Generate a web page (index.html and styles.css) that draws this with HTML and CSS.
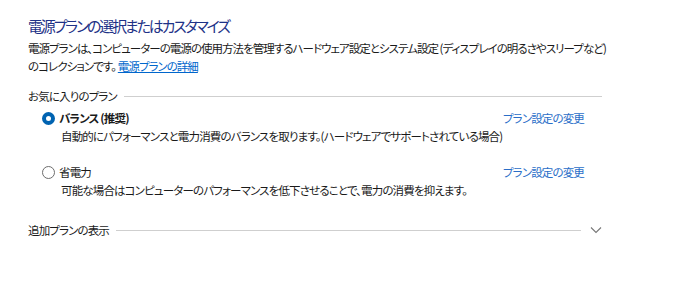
FILE: index.html
```html
<!DOCTYPE html>
<html lang="ja">
<head>
<meta charset="utf-8">
<title>電源オプション</title>
<link rel="stylesheet" href="styles.css">
</head>
<body>
<main class="page">
  <h1 class="title">電源プランの選択またはカスタマイズ</h1>
  <p class="intro">電源プランは、コンピューターの電源の使用方法を管理するハードウェア設定とシステム設定 (ディスプレイの明るさやスリープなど)<br>のコレクションです。<a class="intro-link" href="#">電源プランの詳細</a></p>

  <section class="group">
    <div class="group-head"><span class="group-label">お気に入りのプラン</span><span class="rule"></span></div>

    <div class="plan">
      <div class="plan-row">
        <label class="plan-name bold"><span class="radio checked"></span>バランス (推奨)</label>
        <a class="plan-link" href="#">プラン設定の変更</a>
      </div>
      <p class="plan-desc">自動的にパフォーマンスと電力消費のバランスを取ります。(ハードウェアでサポートされている場合)</p>
    </div>

    <div class="plan second">
      <div class="plan-row">
        <label class="plan-name"><span class="radio"></span>省電力</label>
        <a class="plan-link" href="#">プラン設定の変更</a>
      </div>
      <p class="plan-desc">可能な場合はコンピューターのパフォーマンスを低下させることで、電力の消費を抑えます。</p>
    </div>
  </section>

  <div class="group-head more"><span class="group-label">追加プランの表示</span><span class="rule short"></span>
    <svg class="chevron" width="12" height="8" viewBox="0 0 12 8"><path d="M1 1.5 L6 6.5 L11 1.5" fill="none" stroke="#777" stroke-width="1.1"/></svg>
  </div>
</main>
</body>
</html>
```

FILE: styles.css
```css
html, body {
  margin: 0;
  padding: 0;
  background: #ffffff;
}
body {
  font-family: "Noto Sans CJK JP", "Noto Sans", sans-serif;
  font-feature-settings: "palt";
  color: #1a1a1a;
  font-size: 11.5px;
  letter-spacing: -0.85px;
}
.page {
  width: 580px;
  padding: 16px 0 0 28px;
}
.title {
  margin: 0;
  font-size: 15px;
  line-height: 20px;
  font-weight: 400;
  letter-spacing: -2.2px;
  color: #1e3287;
}
.intro {
  margin: 3px 0 0 0;
  line-height: 18px;
  white-space: nowrap;
  letter-spacing: -0.97px;
}
.intro-link {
  color: #0066cc;
  text-decoration: underline;
  margin-left: 2px;
}
.group {
  margin-top: 12px;
}
.group-head {
  display: flex;
  align-items: center;
  height: 18px;
  line-height: 18px;
  width: 574px;
}
.group-label {
  flex: none;
}
.rule {
  flex: 1;
  height: 1px;
  background: #cfcfcf;
  margin-left: 7px;
}
.plan {
  margin-top: 4px;
  padding-left: 14px;
}
.plan.second {
  margin-top: 18px;
}
.plan-row {
  display: flex;
  align-items: center;
  justify-content: space-between;
  height: 18px;
  width: 542px;
}
.plan-name {
  display: flex;
  align-items: center;
}
.bold {
  font-weight: 700;
}
.radio {
  box-sizing: border-box;
  width: 13px;
  height: 13px;
  border-radius: 50%;
  border: 1px solid #6d6d6d;
  margin-right: 4px;
  background: #fff;
}
.radio.checked {
  border: 4px solid #0063b1;
}
.plan-link {
  color: #2a6ec8;
  text-decoration: none;
}
.plan-desc {
  margin: 0;
  padding-left: 19px;
  line-height: 18px;
}
.more {
  margin-top: 22px;
}
.rule.short {
  margin-right: 9px;
}
.chevron {
  flex: none;
}
```
